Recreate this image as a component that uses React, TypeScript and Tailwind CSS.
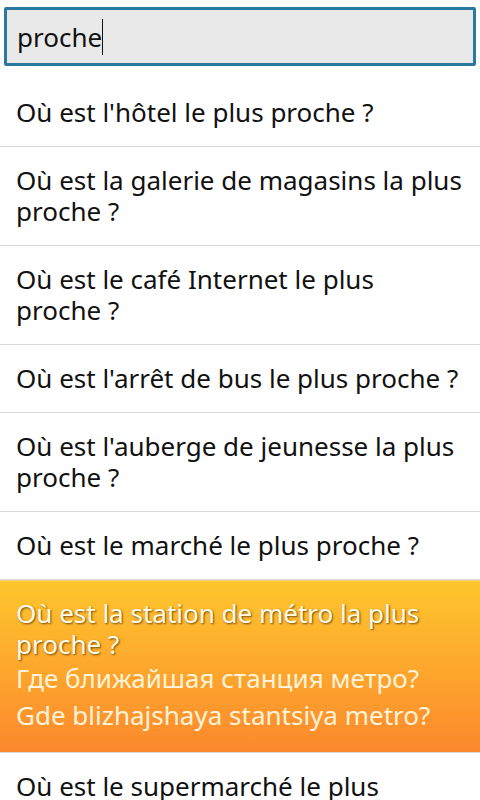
import React from "react";

const rows: { fr: string; sel?: boolean; ru?: string; tr?: string }[] = [
  { fr: "Où est l'hôtel le plus proche\u00a0?" },
  { fr: "Où est la galerie de magasins la plus proche\u00a0?" },
  { fr: "Où est le café Internet le plus proche\u00a0?" },
  { fr: "Où est l'arrêt de bus le plus proche\u00a0?" },
  { fr: "Où est l'auberge de jeunesse la plus proche\u00a0?" },
  { fr: "Où est le marché le plus proche\u00a0?" },
  {
    fr: "Où est la station de métro la plus proche\u00a0?",
    sel: true,
    ru: "Где ближайшая станция метро?",
    tr: "Gde blizhajshaya stantsiya metro?",
  },
  { fr: "Où est le supermarché le plus proche\u00a0?" },
];

export default function App() {
  return (
    <div
      className="w-[480px] h-[800px] overflow-hidden bg-white"
      style={{ fontFamily: '"Noto Sans", "Open Sans", sans-serif' }}
    >
      <div className="px-[4px] pt-[7px]">
        <div className="h-[59px] border-[3px] border-[#2a7aa0] rounded-[2px] bg-[#e9e9e9] flex items-center pl-[10px]">
          <span className="text-[26px] text-[#111] leading-none">proche</span>
          <span className="w-[1px] h-[36px] bg-[#111]" />
        </div>
      </div>
      <div className="mt-[13px]">
        {rows.map((r, i) =>
          r.sel ? (
            <div
              key={i}
              className="border-b border-[#d9d9d9] border-t border-t-[#f3d48a] bg-gradient-to-b from-[#fdc62c] to-[#fb882d] pl-[16px] pr-[12px] pt-[17px] pb-[18px]"
            >
              <div
                className="text-[26px] leading-[31px] text-[#fffbe6]"
                style={{ textShadow: "1px 1px 2px rgba(70,40,0,0.75)" }}
              >
                {r.fr}
              </div>
              <div className="text-[26px] leading-[37px] text-[#fff3d9]">{r.ru}</div>
              <div className="text-[26px] leading-[37px] text-[#fff3d9]">{r.tr}</div>
            </div>
          ) : (
            <div
              key={i}
              className="border-b border-[#d9d9d9] pl-[16px] pr-[12px] py-[18px] text-[26px] leading-[31px] text-[#111]"
            >
              {r.fr}
            </div>
          )
        )}
      </div>
    </div>
  );
}
